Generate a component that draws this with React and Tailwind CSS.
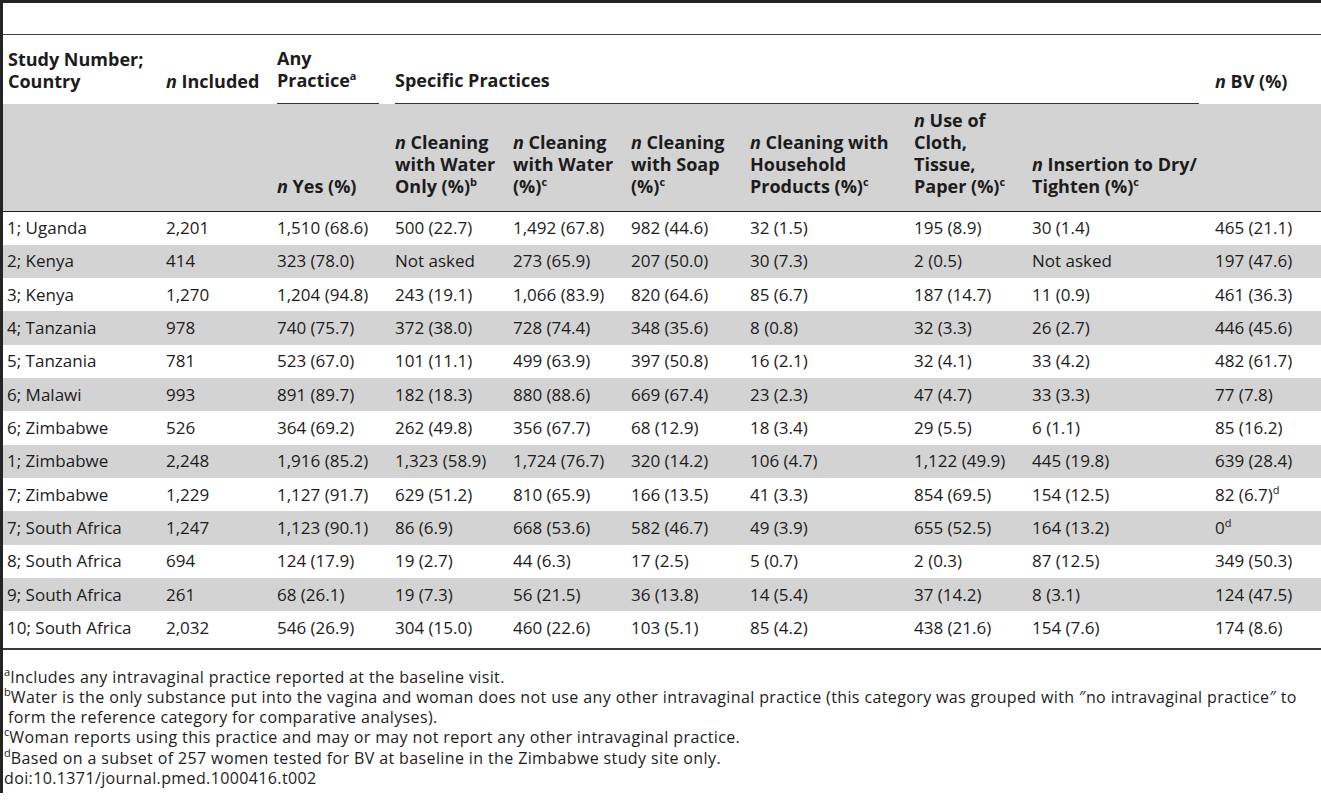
import React from 'react';

const rows = [
  ['1; Uganda', '2,201', '1,510 (68.6)', '500 (22.7)', '1,492 (67.8)', '982 (44.6)', '32 (1.5)', '195 (8.9)', '30 (1.4)', '465 (21.1)'],
  ['2; Kenya', '414', '323 (78.0)', 'Not asked', '273 (65.9)', '207 (50.0)', '30 (7.3)', '2 (0.5)', 'Not asked', '197 (47.6)'],
  ['3; Kenya', '1,270', '1,204 (94.8)', '243 (19.1)', '1,066 (83.9)', '820 (64.6)', '85 (6.7)', '187 (14.7)', '11 (0.9)', '461 (36.3)'],
  ['4; Tanzania', '978', '740 (75.7)', '372 (38.0)', '728 (74.4)', '348 (35.6)', '8 (0.8)', '32 (3.3)', '26 (2.7)', '446 (45.6)'],
  ['5; Tanzania', '781', '523 (67.0)', '101 (11.1)', '499 (63.9)', '397 (50.8)', '16 (2.1)', '32 (4.1)', '33 (4.2)', '482 (61.7)'],
  ['6; Malawi', '993', '891 (89.7)', '182 (18.3)', '880 (88.6)', '669 (67.4)', '23 (2.3)', '47 (4.7)', '33 (3.3)', '77 (7.8)'],
  ['6; Zimbabwe', '526', '364 (69.2)', '262 (49.8)', '356 (67.7)', '68 (12.9)', '18 (3.4)', '29 (5.5)', '6 (1.1)', '85 (16.2)'],
  ['1; Zimbabwe', '2,248', '1,916 (85.2)', '1,323 (58.9)', '1,724 (76.7)', '320 (14.2)', '106 (4.7)', '1,122 (49.9)', '445 (19.8)', '639 (28.4)'],
  ['7; Zimbabwe', '1,229', '1,127 (91.7)', '629 (51.2)', '810 (65.9)', '166 (13.5)', '41 (3.3)', '854 (69.5)', '154 (12.5)', ['82 (6.7)', 'd']],
  ['7; South Africa', '1,247', '1,123 (90.1)', '86 (6.9)', '668 (53.6)', '582 (46.7)', '49 (3.9)', '655 (52.5)', '164 (13.2)', ['0', 'd']],
  ['8; South Africa', '694', '124 (17.9)', '19 (2.7)', '44 (6.3)', '17 (2.5)', '5 (0.7)', '2 (0.3)', '87 (12.5)', '349 (50.3)'],
  ['9; South Africa', '261', '68 (26.1)', '19 (7.3)', '56 (21.5)', '36 (13.8)', '14 (5.4)', '37 (14.2)', '8 (3.1)', '124 (47.5)'],
  ['10; South Africa', '2,032', '546 (26.9)', '304 (15.0)', '460 (22.6)', '103 (5.1)', '85 (4.2)', '438 (21.6)', '154 (7.6)', '174 (8.6)'],
];

// small raised letter for footnote marks
const Sup = ({ children }) => (
  <span className="relative top-[-7px] text-[11px] leading-none tracking-normal">{children}</span>
);

const N = () => <i>n</i>;

// header cells of the grey second header row
const subHeads = [
  <><N /> Cleaning<br />with Water<br />Only (%)<Sup>b</Sup></>,
  <><N /> Cleaning<br />with Water<br />(%)<Sup>c</Sup></>,
  <><N /> Cleaning<br />with Soap<br />(%)<Sup>c</Sup></>,
  <><N /> Cleaning with<br />Household<br />Products (%)<Sup>c</Sup></>,
  <><N /> Use of<br />Cloth,<br />Tissue,<br />Paper (%)<Sup>c</Sup></>,
  <><N /> Insertion to Dry/<br />Tighten (%)<Sup>c</Sup></>,
];

export default function App() {
  return (
    <div className="w-[1321px] h-[800px] bg-white text-[#1c1c1c] font-['Open_Sans',sans-serif]">
      <div className="h-[793px] border-t-[3px] border-l-[3px] border-[#242424]">
        <div className="h-[31px]" />
        <table className="w-[1318px] table-fixed border-collapse border-t border-[#444] text-[17px] leading-[22px]">
          <colgroup>
            <col className="w-[155px]" />
            <col className="w-[111px]" />
            <col className="w-[118px]" />
            <col className="w-[118px]" />
            <col className="w-[118px]" />
            <col className="w-[119px]" />
            <col className="w-[164px]" />
            <col className="w-[118px]" />
            <col className="w-[183px]" />
            <col className="w-[114px]" />
          </colgroup>
          <thead className="font-bold text-[18px]">
            <tr className="h-[69px]">
              <th className="pl-[5px] pr-2 pb-3 text-left align-bottom font-bold whitespace-nowrap">Study Number;<br />Country</th>
              <th className="px-2 pb-3 text-left align-bottom font-bold whitespace-nowrap"><N /> Included</th>
              <th className="px-2 text-left align-bottom font-bold">
                <div className="pb-3 border-b border-[#333]">Any<br />Practice<Sup>a</Sup></div>
              </th>
              <th colSpan={6} className="px-2 text-left align-bottom font-bold">
                <div className="pb-3 border-b border-[#333]">Specific Practices</div>
              </th>
              <th className="px-2 pb-3 text-left align-bottom font-bold whitespace-nowrap"><N /> BV (%)</th>
            </tr>
            <tr className="h-[108px] bg-[#d3d3d3] border-b border-[#222]">
              <th />
              <th />
              <th className="px-2 pb-[14px] text-left align-bottom font-bold whitespace-nowrap"><N /> Yes (%)</th>
              {subHeads.map((h, i) => (
                <th key={i} className="px-2 pb-[14px] text-left align-bottom font-bold whitespace-nowrap">{h}</th>
              ))}
              <th />
            </tr>
          </thead>
          <tbody>
            {rows.map((r, i) => (
              <tr key={i} className={`h-[33.33px] ${i % 2 === 1 ? 'bg-[#d3d3d3]' : ''}`}>
                {r.map((c, j) => (
                  <td key={j} className={`${j === 0 ? 'pl-[4px] pr-2' : 'px-2'} py-0 align-middle whitespace-nowrap`}>
                    {Array.isArray(c) ? <>{c[0]}<Sup>{c[1]}</Sup></> : c}
                  </td>
                ))}
              </tr>
            ))}
            <tr className="h-[3px]"><td colSpan={10} /></tr>
          </tbody>
        </table>
        <div className="w-[1318px] h-[2px] bg-[#3a3a3a]" />
        <div className="pt-[17px] text-[16px] leading-[20.2px] tracking-[0.38px] whitespace-nowrap">
          <p className="pl-[5px] indent-[-4px]"><Sup>a</Sup>Includes any intravaginal practice reported at the baseline visit.</p>
          <p className="pl-[5px] indent-[-4px]"><Sup>b</Sup>Water is the only substance put into the vagina and woman does not use any other intravaginal practice (this category was grouped with ″no intravaginal practice″ to</p>
          <p className="pl-[5px]">form the reference category for comparative analyses).</p>
          <p className="pl-[5px] indent-[-4px]"><Sup>c</Sup>Woman reports using this practice and may or may not report any other intravaginal practice.</p>
          <p className="pl-[5px] indent-[-4px]"><Sup>d</Sup>Based on a subset of 257 women tested for BV at baseline in the Zimbabwe study site only.</p>
          <p className="pl-[1px]">doi:10.1371/journal.pmed.1000416.t002</p>
        </div>
      </div>
    </div>
  );
}
